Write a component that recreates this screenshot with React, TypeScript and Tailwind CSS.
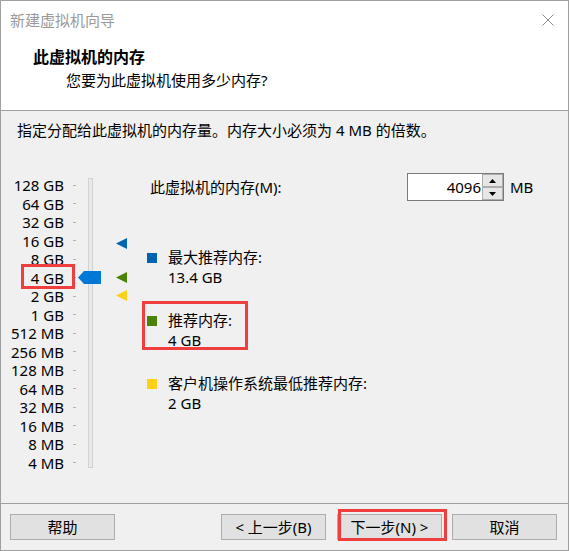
import React from "react";

const levels = [
  "128 GB",
  "64 GB",
  "32 GB",
  "16 GB",
  "8 GB",
  "4 GB",
  "2 GB",
  "1 GB",
  "512 MB",
  "256 MB",
  "128 MB",
  "64 MB",
  "32 MB",
  "16 MB",
  "8 MB",
  "4 MB",
];

function Marker({color, className}: {color: string; className: string}) {
  return (
    <svg width="11" height="11" viewBox="0 0 11 11" className={className}>
      <polygon points="0,5.5 11,0 11,11" fill={color} />
    </svg>
  );
}

function MemorySlider() {
  return (
    <div className="relative w-[146px] pt-[3px]">
      <div className="flex">
        <div className="flex flex-col w-[63px]">
          {levels.map(level => (
            <div key={level} className="h-[18.5px] leading-[18.5px] text-right whitespace-nowrap">
              {level}
            </div>
          ))}
        </div>
        <div className="flex flex-col ml-[9px] w-[3px]">
          {levels.map(level => (
            <div key={level} className="h-[18.5px] flex items-center">
              <div className="w-[3px] h-[1px] bg-[#b4b4b4]" />
            </div>
          ))}
        </div>
        <div className="ml-[12px] mt-[2px] w-[5px] h-[290px] border border-[#d2d2d2] bg-[#e7eaea]" />
      </div>
      {/* thumb */}
      <svg width="23" height="13" viewBox="0 0 23 13" className="absolute left-[77px] top-[98px]">
        <polygon points="0,6.5 6,0 23,0 23,13 6,13" fill="#0078d7" />
      </svg>
      <Marker color="#0063b1" className="absolute left-[115px] top-[65px]" />
      <Marker color="#498205" className="absolute left-[115px] top-[99px]" />
      <Marker color="#fcd116" className="absolute left-[115px] top-[117px]" />
      <div className="absolute left-[20px] top-[91px] w-[54px] h-[25px] border-[3px] border-[#ef3e3e]" />
    </div>
  );
}

function SpinBox() {
  return (
    <div className="flex w-[97px] h-[28px] border border-[#7a7a7a] bg-white">
      <div className="flex-1 text-right pr-[1px] leading-[26px]">4096</div>
      <div className="flex flex-col w-[21px]">
        <div className="h-[13px] border border-[#adadad] bg-[#e6e6e6] flex items-center justify-center">
          <svg width="7" height="4" viewBox="0 0 7 4">
            <polygon points="3.5,0 7,4 0,4" fill="#000" />
          </svg>
        </div>
        <div className="h-[13px] border border-[#adadad] bg-[#e6e6e6] flex items-center justify-center">
          <svg width="7" height="4" viewBox="0 0 7 4">
            <polygon points="0,0 7,0 3.5,4" fill="#000" />
          </svg>
        </div>
      </div>
    </div>
  );
}

function Legend({
  color,
  label,
  value,
  className,
  highlight,
}: {
  color: string;
  label: string;
  value: string;
  className: string;
  highlight?: boolean;
}) {
  return (
    <div className={`relative flex ${className}`}>
      <div className="w-[10px] h-[10px] mt-[6px] mr-[11px]" style={{backgroundColor: color}} />
      <div className="flex flex-col leading-[20px]">
        <div>{label}</div>
        <div>{value}</div>
      </div>
      {highlight && (
        <div className="absolute left-[-5px] top-[-9px] w-[106px] h-[49px] border-[3px] border-[#ef3e3e]" />
      )}
    </div>
  );
}

function WizardButton({children}: {children: React.ReactNode}) {
  return (
    <div className="w-[105px] h-[26px] border border-[#adadad] bg-[#e1e1e1] flex items-center justify-center">
      {children}
    </div>
  );
}

export default function App() {
  return (
    <div className="w-[569px] h-[551px] border border-[#a0a0a0] bg-[#f0f0f0] flex flex-col text-[15px] text-black font-['Noto_Sans','Noto_Sans_CJK_SC',sans-serif]">
      <div className="h-[110px] bg-white border-b border-[#a0a0a0] flex flex-col">
        <div className="h-[38px] flex items-center justify-between pl-[9px] pr-[14px] text-[#9a9a9a]">
          <span>新建虚拟机向导</span>
          <svg width="12" height="12" viewBox="0 0 12 12">
            <path d="M0.5 0.5 L11.5 11.5 M11.5 0.5 L0.5 11.5" stroke="#8a8a8a" strokeWidth="1" />
          </svg>
        </div>
        <div className="mt-[8px] pl-[32px] h-[20px] leading-[20px] text-[16px] font-bold">此虚拟机的内存</div>
        <div className="mt-[3px] pl-[65px] h-[20px] leading-[20px]">您要为此虚拟机使用多少内存?</div>
      </div>

      <div className="flex-1 flex flex-col">
        <div className="mt-[9px] pl-[16px] h-[20px] leading-[20px]">
          指定分配给此虚拟机的内存量。内存大小必须为 4 MB 的倍数。
        </div>
        <div className="mt-[33px] flex">
          <MemorySlider />
          <div className="flex flex-col">
            <div className="h-[28px] flex items-center">
              <div className="w-[260px] pl-[3px]">此虚拟机的内存(M):</div>
              <SpinBox />
              <div className="ml-[6px]">MB</div>
            </div>
            <Legend color="#0063b1" label="最大推荐内存:" value="13.4 GB" className="mt-[46px]" />
            <Legend color="#498205" label="推荐内存:" value="4 GB" className="mt-[23px]" highlight />
            <Legend color="#fcd116" label="客户机操作系统最低推荐内存:" value="2 GB" className="mt-[23px]" />
          </div>
        </div>
      </div>

      <div className="h-[47px] border-t border-[#a0a0a0] flex pt-[10px] pl-[9px] pr-[11px]">
        <WizardButton>帮助</WizardButton>
        <div className="ml-auto flex">
          <WizardButton>&lt; 上一步(B)</WizardButton>
          <div className="relative ml-[11px]">
            <WizardButton>下一步(N) &gt;</WizardButton>
            <div className="absolute left-[1px] top-[-5px] w-[109px] h-[32px] border-[3px] border-[#ef3e3e]" />
          </div>
          <div className="ml-[10px]">
            <WizardButton>取消</WizardButton>
          </div>
        </div>
      </div>
    </div>
  );
}
